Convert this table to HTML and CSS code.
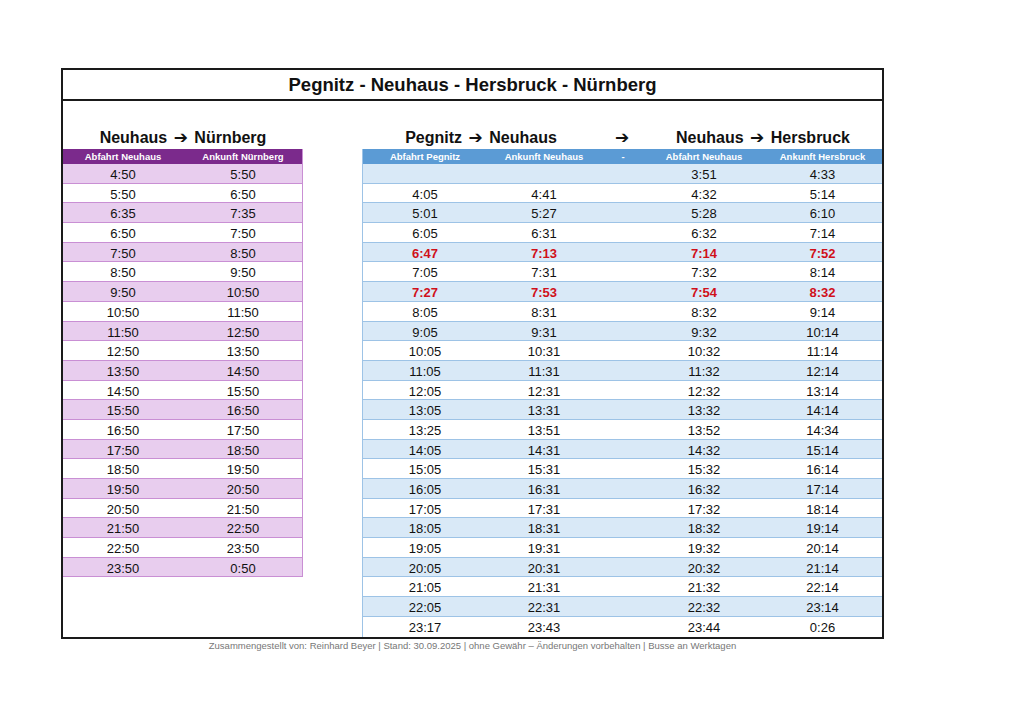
FILE: index.html
```html
<!DOCTYPE html>
<html lang="de">
<head>
<meta charset="utf-8">
<title>Pegnitz - Neuhaus - Hersbruck - Nürnberg</title>
<link rel="stylesheet" href="styles.css">
</head>
<body>
<div class="page">
  <div class="frame">
    <div class="title">Pegnitz - Neuhaus - Hersbruck - Nürnberg</div>
    <div class="body">
      <section class="left">
        <div class="heads"><div class="head">Neuhaus <span class="arr">➔</span> Nürnberg</div></div>
        <div class="tbl purple">
          <div class="row hdr"><span>Abfahrt Neuhaus</span><span>Ankunft Nürnberg</span></div>
          <div class="row"><span>4:50</span><span>5:50</span></div>
          <div class="row"><span>5:50</span><span>6:50</span></div>
          <div class="row"><span>6:35</span><span>7:35</span></div>
          <div class="row"><span>6:50</span><span>7:50</span></div>
          <div class="row"><span>7:50</span><span>8:50</span></div>
          <div class="row"><span>8:50</span><span>9:50</span></div>
          <div class="row"><span>9:50</span><span>10:50</span></div>
          <div class="row"><span>10:50</span><span>11:50</span></div>
          <div class="row"><span>11:50</span><span>12:50</span></div>
          <div class="row"><span>12:50</span><span>13:50</span></div>
          <div class="row"><span>13:50</span><span>14:50</span></div>
          <div class="row"><span>14:50</span><span>15:50</span></div>
          <div class="row"><span>15:50</span><span>16:50</span></div>
          <div class="row"><span>16:50</span><span>17:50</span></div>
          <div class="row"><span>17:50</span><span>18:50</span></div>
          <div class="row"><span>18:50</span><span>19:50</span></div>
          <div class="row"><span>19:50</span><span>20:50</span></div>
          <div class="row"><span>20:50</span><span>21:50</span></div>
          <div class="row"><span>21:50</span><span>22:50</span></div>
          <div class="row"><span>22:50</span><span>23:50</span></div>
          <div class="row"><span>23:50</span><span>0:50</span></div>
        </div>
      </section>
      <section class="right">
        <div class="heads five">
          <div class="head span2">Pegnitz <span class="arr">➔</span> Neuhaus</div>
          <div class="head"><span class="arr">➔</span></div>
          <div class="head span2">Neuhaus <span class="arr">➔</span> Hersbruck</div>
        </div>
        <div class="tbl blue">
          <div class="row hdr"><span>Abfahrt Pegnitz</span><span>Ankunft Neuhaus</span><span>-</span><span>Abfahrt Neuhaus</span><span>Ankunft Hersbruck</span></div>
          <div class="row"><span></span><span></span><span></span><span>3:51</span><span>4:33</span></div>
          <div class="row"><span>4:05</span><span>4:41</span><span></span><span>4:32</span><span>5:14</span></div>
          <div class="row"><span>5:01</span><span>5:27</span><span></span><span>5:28</span><span>6:10</span></div>
          <div class="row"><span>6:05</span><span>6:31</span><span></span><span>6:32</span><span>7:14</span></div>
          <div class="row red"><span>6:47</span><span>7:13</span><span></span><span>7:14</span><span>7:52</span></div>
          <div class="row"><span>7:05</span><span>7:31</span><span></span><span>7:32</span><span>8:14</span></div>
          <div class="row red"><span>7:27</span><span>7:53</span><span></span><span>7:54</span><span>8:32</span></div>
          <div class="row"><span>8:05</span><span>8:31</span><span></span><span>8:32</span><span>9:14</span></div>
          <div class="row"><span>9:05</span><span>9:31</span><span></span><span>9:32</span><span>10:14</span></div>
          <div class="row"><span>10:05</span><span>10:31</span><span></span><span>10:32</span><span>11:14</span></div>
          <div class="row"><span>11:05</span><span>11:31</span><span></span><span>11:32</span><span>12:14</span></div>
          <div class="row"><span>12:05</span><span>12:31</span><span></span><span>12:32</span><span>13:14</span></div>
          <div class="row"><span>13:05</span><span>13:31</span><span></span><span>13:32</span><span>14:14</span></div>
          <div class="row"><span>13:25</span><span>13:51</span><span></span><span>13:52</span><span>14:34</span></div>
          <div class="row"><span>14:05</span><span>14:31</span><span></span><span>14:32</span><span>15:14</span></div>
          <div class="row"><span>15:05</span><span>15:31</span><span></span><span>15:32</span><span>16:14</span></div>
          <div class="row"><span>16:05</span><span>16:31</span><span></span><span>16:32</span><span>17:14</span></div>
          <div class="row"><span>17:05</span><span>17:31</span><span></span><span>17:32</span><span>18:14</span></div>
          <div class="row"><span>18:05</span><span>18:31</span><span></span><span>18:32</span><span>19:14</span></div>
          <div class="row"><span>19:05</span><span>19:31</span><span></span><span>19:32</span><span>20:14</span></div>
          <div class="row"><span>20:05</span><span>20:31</span><span></span><span>20:32</span><span>21:14</span></div>
          <div class="row"><span>21:05</span><span>21:31</span><span></span><span>21:32</span><span>22:14</span></div>
          <div class="row"><span>22:05</span><span>22:31</span><span></span><span>22:32</span><span>23:14</span></div>
          <div class="row"><span>23:17</span><span>23:43</span><span></span><span>23:44</span><span>0:26</span></div>
        </div>
      </section>
    </div>
  </div>
  <div class="footer">Zusammengestellt von: Reinhard Beyer | Stand: 30.09.2025 | ohne Gewähr – Änderungen vorbehalten | Busse an Werktagen</div>
</div>
</body>
</html>
```
FILE: styles.css
```css
* { box-sizing: border-box; }
html, body { margin: 0; padding: 0; background: #fff; }
body {
  font-family: "Liberation Sans", "DejaVu Sans", Arial, sans-serif;
  color: #111;
}
.page {
  width: 823px;
  margin: 68px 0 0 61px;
}
.frame {
  border: 2px solid #1a1a1a;
}
.title {
  height: 31px;
  line-height: 30px;
  text-align: center;
  font-size: 18.5px;
  font-weight: bold;
  border-bottom: 2px solid #1a1a1a;
}
.body {
  display: flex;
  gap: 59px;
}
.left { width: 240px; }
.right { width: 520px; }
.heads {
  margin-top: 28px;
  height: 20px;
  display: flex;
  justify-content: center;
}
.heads.five {
  display: grid;
  grid-template-columns: 238px 44px 238px;
}
.head {
  font-size: 16px;
  font-weight: bold;
  line-height: 16px;
  text-align: center;
  color: #111;
  white-space: nowrap;
}
.arr {
  font-family: "DejaVu Sans", sans-serif;
  font-size: 17px;
  font-weight: bold;
  margin: 0 2px;
}
.tbl .row {
  display: grid;
  height: 19.7px;
  align-items: start;
  text-align: center;
  font-size: 13px;
  border-bottom: 1px solid;
}
.tbl .row span { line-height: 18px; padding-top: 2px; }
.tbl .row.hdr {
  height: 15px;
  font-size: 9.5px;
  font-weight: bold;
  color: #fff;
  border-bottom: none;
  align-items: center;
}
.tbl .row.hdr span { line-height: 15px; padding-top: 0; }

.purple { border-right: 1px solid #c98fd4; }
.purple .row { grid-template-columns: 120px 120px; border-color: #c98fd4; }
.purple .row:nth-child(even) { background: #e8cdee; }
.purple .row:nth-child(odd) { background: #fff; }
.purple .row.hdr { background: #7b2a8c; }

.blue { border-left: 1px solid #9dc3e6; }
.blue .row { grid-template-columns: 124px 114px 44px 118px 119px; border-color: #9dc3e6; }
.blue .row:nth-child(even) { background: #d9e9f7; }
.blue .row:nth-child(odd) { background: #fff; }
.blue .row.hdr { background: #5b9bd5; }
.blue .row:last-child { border-bottom: none; }
.row.red span { color: #d0101a; font-weight: bold; }

.footer {
  text-align: center;
  font-size: 9.5px;
  color: #777;
  line-height: 14px;
}
```
